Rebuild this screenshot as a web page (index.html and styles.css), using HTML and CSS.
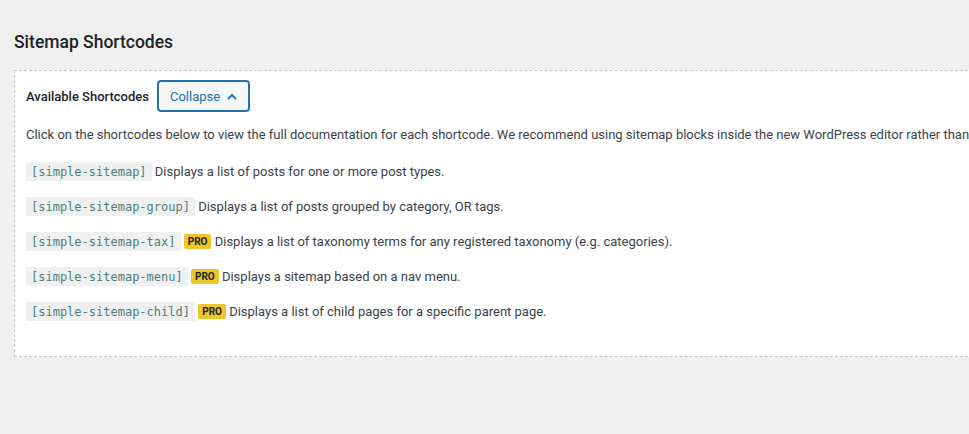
FILE: index.html
```html
<!DOCTYPE html>
<html>
<head>
<meta charset="utf-8">
<link rel="stylesheet" href="styles.css">
</head>
<body>
<div class="wrap">
  <h1 class="title">Sitemap Shortcodes</h1>
  <div class="box">
    <div class="box-head">
      <span class="label">Available Shortcodes</span>
      <button class="btn">Collapse <svg class="chev" width="10" height="7" viewBox="0 0 10 7"><path d="M1 6 L5 2 L9 6" fill="none" stroke="#2271b1" stroke-width="2"/></svg></button>
    </div>
    <p class="intro">Click on the shortcodes below to view the full documentation for each shortcode. We recommend using sitemap blocks inside the new WordPress editor rather than shortcodes.</p>
    <ul class="list">
      <li><code class="sc">[simple-sitemap]</code> Displays a list of posts for one or more post types.</li>
      <li><code class="sc">[simple-sitemap-group]</code> Displays a list of posts grouped by category, OR tags.</li>
      <li><code class="sc">[simple-sitemap-tax]</code> <span class="pro">PRO</span> Displays a list of taxonomy terms for any registered taxonomy (e.g. categories).</li>
      <li><code class="sc">[simple-sitemap-menu]</code> <span class="pro">PRO</span> Displays a sitemap based on a nav menu.</li>
      <li><code class="sc">[simple-sitemap-child]</code> <span class="pro">PRO</span> Displays a list of child pages for a specific parent page.</li>
    </ul>
  </div>
</div>
</body>
</html>
```
FILE: styles.css
```css
html, body {
  margin: 0;
  padding: 0;
  background: #f0f0f1;
  overflow: hidden;
}
body {
  font-family: Roboto, "Open Sans", sans-serif;
  font-size: 13px;
  color: #3c434a;
  width: 969px;
  height: 434px;
}
.wrap {
  padding: 28px 0 0 14px;
}
.title {
  margin: 0 0 14px;
  font-size: 17.5px;
  font-weight: 500;
  color: #1d2327;
  line-height: 28px;
}
.box {
  width: 1100px;
  background: #fff;
  border: 1px dashed #c3c4c7;
  padding: 10px 11px 19px;
}
.box-head {
  display: flex;
  align-items: center;
  gap: 8px;
}
.label {
  font-weight: 500;
  color: #1d2327;
}
.btn {
  font-family: inherit;
  font-size: 13px;
  color: #2271b1;
  background: #f6f7f7;
  border: 1px solid #2271b1;
  border-radius: 3px;
  height: 30px;
  padding: 0 11px;
  display: flex;
  align-items: center;
  gap: 7px;
  box-shadow: 0 0 0 1px #2271b1;
  margin-left: 1px;
}
.intro {
  white-space: nowrap;
  margin: 12px 0 0;
  line-height: 24px;
}
.list {
  list-style: none;
  margin: 15px 0 0;
  padding: 0;
}
.list li {
  height: 20px;
  line-height: 20px;
  margin-bottom: 15px;
  white-space: nowrap;
}
.sc {
  font-family: "DejaVu Sans Mono", "Liberation Mono", monospace;
  font-size: 12px;
  color: #4d7f7a;
  background: #f0f0f1;
  padding: 3px 5px 2px;
}
.pro {
  display: inline-block;
  vertical-align: middle;
  background: #f0c529;
  color: #1d2327;
  font-size: 10px;
  font-weight: 700;
  line-height: 15px;
  padding: 0 4px;
  border-radius: 2px;
  margin-top: -3px;
}
```
